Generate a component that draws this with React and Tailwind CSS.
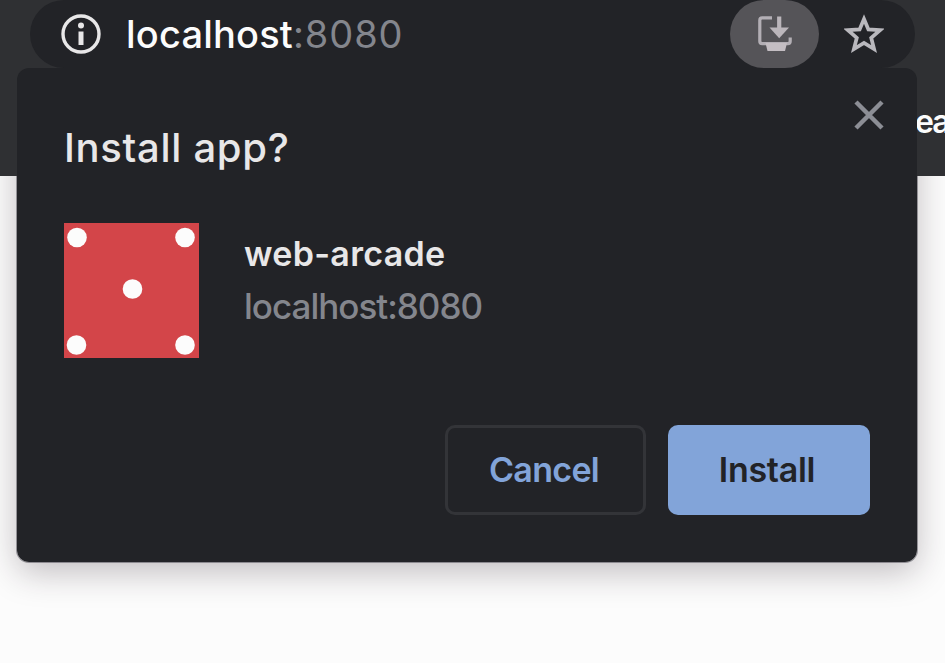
const DOTS = [
  [13, 14.5],
  [121, 14.5],
  [68.5, 66],
  [12.5, 122],
  [121, 122],
];

function InfoIcon() {
  return (
    <svg className="size-10 shrink-0" viewBox="0 0 40 40" fill="none">
      <circle cx="20" cy="20" r="18" stroke="#e8e7e8" strokeWidth="3.4" />
      <circle cx="20" cy="11.6" r="3" fill="#e8e7e8" />
      <path d="M20 17.5V31" stroke="#e8e7e8" strokeWidth="5" />
    </svg>
  );
}

function InstallIcon() {
  return (
    <svg className="h-9 w-9" viewBox="0 0 36 36" fill="none">
      <path
        d="M15 1.8H5.2Q2.8 1.8 2.8 4.2V25.2Q2.8 27.6 5.2 27.6H30.8Q33.2 27.6 33.2 25.2V21.5"
        stroke="#b3afb5"
        strokeWidth="3.2"
      />
      <path d="M8.5 27H30L28 35H10.5Z" fill="#c4bec3" />
      <path d="M22.2 0.5V14" stroke="#bbb6bb" strokeWidth="4.2" />
      <path d="M12.5 11.5H32L22.2 22.3Z" fill="#bbb6bb" />
    </svg>
  );
}

function StarIcon() {
  return (
    <svg className="h-10 w-10 shrink-0" viewBox="0 0 40 40" fill="none">
      <path
        d="M20 5L24.4 15.4L36 16.2L27.2 23.8L30.1 35L20 29L9.9 35L12.8 23.8L4 16.2L15.6 15.4Z"
        stroke="#b9b8bd"
        strokeWidth="3.7"
      />
    </svg>
  );
}

function AppIcon() {
  return (
    <svg className="h-[135px] w-[135px] shrink-0" viewBox="0 0 135 135">
      <rect width="135" height="135" fill="#d34549" />
      {DOTS.map(([x, y]) => (
        <circle key={`${x}-${y}`} cx={x} cy={y} r="9.8" fill="#fcfcfc" />
      ))}
    </svg>
  );
}

export default function App() {
  return (
    <div className="relative isolate h-[663px] w-[945px] overflow-hidden bg-[#fcfcfc] font-['Inter','Liberation_Sans',sans-serif]">
      <div className="absolute top-[68px] left-[17px] h-[494px] w-[900px] rounded-[12px] shadow-[0_10px_34px_rgba(40,25,35,0.28),0_0_0_1px_#a5a5aa]" />
      <header className="relative h-[176px] bg-[#2f3033]">
        <div className="mx-[30px] flex h-[68px] items-center rounded-full bg-[#222327] px-[31px]">
          <InfoIcon />
          <div className="ml-[25px] flex-1 text-[38px] leading-[68px] whitespace-nowrap">
            <span className="font-medium tracking-[0.2px] text-[#fcfcfc]">localhost</span>
            <span className="tracking-[0.9px] text-[#84868d]">:8080</span>
          </div>
          <button className="flex h-[68px] w-[89px] items-center justify-center rounded-full bg-[#555458]">
            <InstallIcon />
          </button>
          <div className="ml-[25px]">
            <StarIcon />
          </div>
        </div>
        <div className="flex h-[108px] items-center justify-end">
          <span className="w-[30px] pb-px text-[32px] font-semibold tracking-[-2px] whitespace-nowrap text-[#fcfcfc]">ea</span>
        </div>
      </header>

      <section
        role="dialog"
        className="absolute top-[68px] left-[17px] flex h-[494px] w-[900px] flex-col rounded-[12px] bg-[#222327] pl-[47px]"
      >
        <div className="flex h-[155px] justify-between pr-[33px]">
          <h1 className="pt-[56px] text-[40px] leading-[48px] font-medium tracking-[0.7px] whitespace-nowrap text-[#e8e7e8]">
            Install app?
          </h1>
          <svg className="mt-[32px] h-[30px] w-[30px]" viewBox="0 0 30 30">
            <path d="M2 2L28 28M28 2L2 28" stroke="#8c8e95" strokeWidth="4.5" />
          </svg>
        </div>
        <div className="flex gap-[45px]">
          <AppIcon />
          <div className="pt-[4px] whitespace-nowrap">
            <p className="text-[34px] leading-[53px] font-semibold tracking-[0.3px] text-[#e8e7e8]">web-arcade</p>
            <p className="text-[35px] leading-[53px] font-medium tracking-[-1px] text-[#84868d]">localhost:8080</p>
          </div>
        </div>
        <div className="mt-[67px] flex justify-end gap-[22px] pr-[47px] text-[34px] font-semibold">
          <button className="h-[90px] w-[201px] rounded-[10px] border-[3px] border-[#333438] pr-[3px] pb-[2px] tracking-[-0.7px] text-[#82a4d9]">
            Cancel
          </button>
          <button className="h-[90px] w-[202px] rounded-[10px] bg-[#82a4d9] pr-[4px] pb-[2px] tracking-[-0.3px] text-[#222327]">
            Install
          </button>
        </div>
      </section>
    </div>
  );
}
